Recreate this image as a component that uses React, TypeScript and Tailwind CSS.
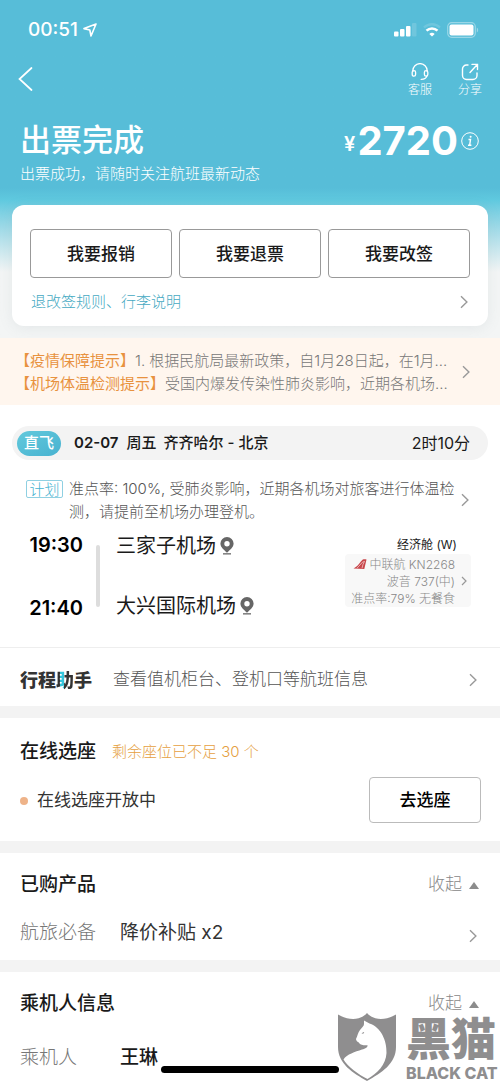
import type { ReactNode } from "react";

function Chevron({ className = "" }: { className?: string }) {
  return (
    <svg
      viewBox="0 0 8 14"
      className={`h-[14px] w-2 shrink-0 text-[#999] ${className}`}
      fill="none"
      stroke="currentColor"
      strokeWidth="1.4"
      aria-hidden="true"
    >
      <path d="M1 1.2 6.9 7 1 12.8" />
    </svg>
  );
}

function Pin() {
  return (
    <svg viewBox="0 0 14 18" className="h-[18px] w-[14px] shrink-0" fill="#666" aria-hidden="true">
      <path
        fillRule="evenodd"
        d="M7 0a6.6 6.6 0 0 1 6.6 6.6C13.600 10.400 10 13 7 15.800 4 13 .4 10.400 .4 6.600A6.600 6.600 0 0 1 7 0Zm0 4a2.700 2.700 0 1 0 0 5.400A2.700 2.700 0 0 0 7 4Z"
      />
      <path d="M3 16.200h8v1.300H3z" />
    </svg>
  );
}

function StatusBar() {
  return (
    <div className="flex h-[60px] items-center justify-between pl-7 pr-[21px]">
      <div className="flex items-center gap-[5px]">
        <span className="text-[19px] font-medium leading-6">00:51</span>
        <svg viewBox="0 0 14 14" className="h-[14px] w-[14px]" fill="none" stroke="white" strokeWidth="1.6" strokeLinejoin="round" aria-hidden="true">
          <path d="M13 1 1 5.600l5.800 1.400 1.200 6Z" />
        </svg>
      </div>
      <div className="flex items-center gap-[6px]">
        <svg viewBox="0 0 23 14" className="h-[14px] w-[23px]" fill="white" aria-hidden="true">
          <rect x="0" y="8.500" width="4.500" height="5" rx="1" />
          <rect x="6" y="6" width="4.500" height="7.500" rx="1" />
          <rect x="12" y="3" width="4.500" height="10.500" rx="1" />
          <rect x="18" y="0" width="4.500" height="13.500" rx="1" opacity=".15" />
        </svg>
        <svg viewBox="0 0 18 14" className="h-[14px] w-[18px]" fill="none" stroke="white" aria-hidden="true">
          <path d="M1 4.500a11.500 11.500 0 0 1 16 0" strokeWidth="2.300" opacity=".15" />
          <path d="M3.500 7.600a8 8 0 0 1 11 0" strokeWidth="2.500" />
          <path d="M9 13.600 6.300 11a4 4 0 0 1 5.400 0Z" fill="white" stroke="none" />
        </svg>
        <svg viewBox="0 0 32 16" className="h-4 w-8" fill="none" aria-hidden="true">
          <rect x=".7" y=".7" width="27.600" height="14.600" rx="4" stroke="white" strokeWidth="1.200" opacity=".4" />
          <rect x="2.500" y="2.500" width="24" height="11" rx="2" fill="white" />
          <path d="M29.800 5.500v5c1.800-.8 1.800-4.200 0-5Z" fill="white" opacity=".4" />
        </svg>
      </div>
    </div>
  );
}

function Header() {
  return (
    <header className="text-white">
      <StatusBar />
      <div className="flex h-[42px] items-start justify-between pl-[18px] pr-[18px]">
        <button type="button" aria-label="返回" className="mt-[7px]">
          <svg viewBox="0 0 15 24" className="h-6 w-[15px]" fill="none" stroke="white" strokeWidth="1.700" strokeLinecap="round" aria-hidden="true">
            <path d="M13.500 1 1.500 12l12 11" />
          </svg>
        </button>
        <div className="flex gap-[26px] text-xs">
          <button type="button" className="flex flex-col items-center">
            <svg viewBox="0 0 18 18" className="mt-[3px] h-[18px] w-[18px]" fill="none" stroke="white" strokeWidth="1.300" strokeLinecap="round" aria-hidden="true">
              <path d="M1.800 8.500V7.800a7.200 7.200 0 0 1 14.400 0v.7" />
              <rect x="1.200" y="7.600" width="3.400" height="5.600" rx="1.700" />
              <rect x="13.400" y="7.600" width="3.400" height="5.600" rx="1.700" />
              <path d="M15.800 13.200c-.6 2.200-2.400 3.200-5.600 3.200" />
            </svg>
            <span className="mt-px leading-4 font-light">客服</span>
          </button>
          <button type="button" className="flex flex-col items-center">
            <svg viewBox="0 0 18 18" className="mt-[3px] h-[18px] w-[18px]" fill="none" stroke="white" strokeWidth="1.400" strokeLinecap="round" aria-hidden="true">
              <path d="M7 2H5.500A4 4 0 0 0 1.500 6v6.500a4 4 0 0 0 4 4h6.500a4 4 0 0 0 4-4V10" />
              <path d="M9 9.500 16.300 1.600M11 1.400h5.500v5.200" />
            </svg>
            <span className="mt-px leading-4 font-light">分享</span>
          </button>
        </div>
      </div>
      <div className="flex h-[103px] items-start justify-between pl-5 pr-[21px]">
        <div>
          <h1 className="pt-[17px] text-[31px] font-medium leading-[42px]">出票完成</h1>
          <p className="mt-px text-[15px] font-light leading-6">出票成功，请随时关注航班最新动态</p>
        </div>
        <div className="flex items-center pt-[15px]">
          <span className="mr-[2px] pt-[6px] text-xl font-semibold">¥</span>
          <span className="text-[40px] font-bold leading-[48px]">2720</span>
          <button type="button" aria-label="价格明细" className="ml-[3px]">
            <svg viewBox="0 0 18 18" className="h-[18px] w-[18px]" fill="none" stroke="white" aria-hidden="true">
              <circle cx="9" cy="9" r="8.300" strokeWidth="1" />
              <path d="M7.500 7.500h2l-.8 5.300M7 13.200h3.400" strokeWidth="1.400" />
              <circle cx="9.600" cy="4.800" r="1" fill="white" stroke="none" />
            </svg>
          </button>
        </div>
      </div>
    </header>
  );
}

function ActionCard() {
  return (
    <section className="mx-3 h-[121px] rounded-xl bg-white px-[18px] pt-6 shadow-[0_2px_14px_rgba(120,140,150,0.12)]">
      <div className="grid grid-cols-3 gap-[7px]">
        {["我要报销", "我要退票", "我要改签"].map((label) => (
          <button key={label} type="button" className="h-[49px] rounded border border-[#999] pt-[2px] text-[17px] font-medium text-[#1a1a1a]">
            {label}
          </button>
        ))}
      </div>
      <a href="#rules" className="mt-3 flex items-center justify-between pl-px pr-[2px] text-[15px] font-light leading-6 text-[#45a9c2]">
        退改签规则、行李说明
        <Chevron />
      </a>
    </section>
  );
}

function Notice() {
  return (
    <a href="#notice" className="mt-3 flex h-[67px] items-center justify-between bg-[#fff6ee] pl-[15px] pr-[30px] text-[15px] font-light leading-[23px] text-[#777]">
      <span className="whitespace-nowrap">
        <span className="block">
          <span className="font-normal text-[#e8923f]">【疫情保障提示】</span>1. 根据民航局最新政策，自1月28日起，在1月...
        </span>
        <span className="block">
          <span className="font-normal text-[#e8923f]">【机场体温检测提示】</span>受国内爆发传染性肺炎影响，近期各机场...
        </span>
      </span>
      <Chevron />
    </a>
  );
}

function Flight() {
  return (
    <section className="px-3 pt-[21px]">
      <div className="flex h-[34px] items-center rounded-full bg-[#f3f3f3] pl-[5px] pr-[18px] text-[15px] font-medium text-[#1a1a1a]">
        <span className="flex h-[25px] w-11 items-center justify-center rounded-full bg-linear-to-br from-[#62c9dc] to-[#48b2d0] text-white">
          直飞
        </span>
        <span className="ml-[13px] font-semibold">02-07</span>
        <span className="ml-2">周五</span>
        <span className="ml-[7px]">齐齐哈尔 - 北京</span>
        <span className="ml-auto text-base font-normal">2时10分</span>
      </div>
      <a href="#punctuality" className="mt-[17px] flex items-start pl-[14px] pr-[19px] text-[15px] font-light leading-[23px] text-[#555]">
        <span className="mt-[3px] flex h-[18px] w-[37px] shrink-0 items-center justify-center rounded-xs border border-[#8fd0e2] text-[#45b2d0]">
          计划
        </span>
        <span className="ml-[6px] flex-1">准点率: 100%, 受肺炎影响，近期各机场对旅客进行体温检测，请提前至机场办理登机。</span>
        <Chevron className="mt-4" />
      </a>
      <div className="mt-[9px] flex h-[115px] text-[#1a1a1a]">
        <div className="flex w-[72px] flex-col items-end gap-[39px] pt-px pr-px text-[20px] font-semibold leading-6 text-black">
          <time>19:30</time>
          <time>21:40</time>
        </div>
        <div className="mt-[13px] ml-3 h-[62px] w-1 rounded-full bg-[#ddd]" />
        <div className="ml-4 flex flex-col gap-8 text-[20px] leading-7">
          <div className="flex items-center gap-[4px]">
            三家子机场
            <Pin />
          </div>
          <div className="flex items-center gap-[4px]">
            大兴国际机场
            <Pin />
          </div>
        </div>
        <div className="mr-[17px] ml-auto w-[126px] text-right text-[12px] leading-[17px]">
          <p className="pt-1 pr-[14px]">经济舱 (W)</p>
          <a href="#aircraft" className="mt-px flex h-[53px] items-center justify-end gap-[6px] rounded bg-[#f8f8f8] pt-px pr-1 font-light text-[#888]">
            <span className="whitespace-nowrap">
              <span className="flex items-center justify-end gap-[2px]">
                <svg viewBox="0 0 14 11" className="h-[11px] w-[14px]" aria-hidden="true">
                  <path d="M.5 9.500C5 7.500 7 3 9.500.8c1-.6 2.500-.6 4-.3L11.300 10Z" fill="#c8474b" />
                  <path d="M4 9.200 9.500 3.200l2-.8-1.500 3-1 3.800" fill="none" stroke="#f0c8ca" strokeWidth=".8" />
                </svg>
                中联航 KN2268
              </span>
              <span className="block">波音 737(中)</span>
              <span className="block">准点率:79% 无餐食</span>
            </span>
            <svg viewBox="0 0 6 10" className="h-[10px] w-[6px]" fill="none" stroke="#999" strokeWidth="1.200" aria-hidden="true">
              <path d="m1 1 4 4-4 4" />
            </svg>
          </a>
        </div>
      </div>
    </section>
  );
}

function Assistant() {
  return (
    <a href="#assistant" className="flex h-[59px] items-center border-t border-[#eee] pr-[23px] pl-5 pt-[6px] text-[17px] font-light text-[#555]">
      <span className="w-[93px] shrink-0 text-[18px] font-black text-[#333]">
        行程
        <span className="bg-[linear-gradient(90deg,#333_22%,#35c5dc_22%,#35c5dc_42%,#333_42%)] bg-clip-text text-transparent">助</span>
        手
      </span>
      <span>查看值机柜台、登机口等航班信息</span>
      <Chevron className="ml-auto" />
    </a>
  );
}

function Section({ title, note, collapsible, children }: { title: string; note?: string; collapsible?: boolean; children: ReactNode }) {
  return (
    <section className="border-t-12 border-[#f3f3f3] pr-[19px] pl-5">
      <div className={`flex items-center ${note ? "h-[68px]" : "h-16"}`}>
        <h2 className="text-[19px] font-medium text-[#1a1a1a]">{title}</h2>
        {note && <span className="ml-4 text-[15px] font-light text-[#e5a040]">{note}</span>}
        {collapsible && (
          <button type="button" className="ml-auto flex items-center gap-[7px] pr-[2px] text-[17px] font-light text-[#888]">
            收起
            <svg viewBox="0 0 10 7" className="h-[7px] w-[10px]" fill="#8c8c8c" aria-hidden="true">
              <path d="M5 0 10 7H0Z" />
            </svg>
          </button>
        )}
      </div>
      {children}
    </section>
  );
}

function Watermark() {
  return (
    <div className="absolute right-0 bottom-0 flex h-[70px] items-end text-[#8f8e8f]">
      <svg viewBox="0 0 60 70" className="h-[70px] w-[60px]" aria-hidden="true">
        <path
          d="M1 2.500C11 8.500 23 9 30 1 37 9 49 8.500 59 2.500V35C59 52 44 61 30 69 16 61 1 52 1 35Z"
          fill="currentColor"
        />
        <path
          d="M27 8.500 32.500 11.500C44 15 50 29 49.500 41 49 53 40 61.500 30.500 67 22 63 10 54 6.500 47.500 10 42 18 40 25 37.500 28.500 36.500 31 35 30.500 33.200 27 33.500 23.500 33 22.500 31.500 22 30 19 29.500 19 27 20.500 24 21 20.500 23 18 25 15.500 27 14 27 12Z"
          fill="white"
        />
        <path d="m24.500 21.800 1.500-1.500 1.200-.3-.6 1.600Z" fill="currentColor" />
      </svg>
      <div className="flex w-[103px] flex-col items-start pl-[9px]">
        <span className="text-[45px] font-black leading-[48px] whitespace-nowrap">黑猫</span>
        <span className="text-[16px] font-extrabold leading-[18px] whitespace-nowrap">BLACK CAT</span>
      </div>
    </div>
  );
}

export default function App() {
  return (
    <div className="relative min-h-screen overflow-hidden bg-white font-['Inter','Noto_Sans_CJK_SC',sans-serif]">
      <div className="bg-linear-to-b from-[#57bdd8] from-[188px] via-[#5fc9df] via-[200px] to-[#f3f5f5] to-[272px]">
        <Header />
        <ActionCard />
        <Notice />
      </div>
      <Flight />
      <Assistant />
      <Section title="在线选座" note="剩余座位已不足 30 个">
        <div className="flex h-[55px] items-center justify-between pb-[27px]">
          <p className="flex items-center gap-[9px] pt-[2px] text-[17px] font-normal text-[#333]">
            <span className="h-2 w-2 rounded-full bg-[#eeb389]" />
            在线选座开放中
          </p>
          <button type="button" className="h-[46px] w-28 rounded border border-[#bbb] pt-[2px] text-[17px] font-medium text-black">
            去选座
          </button>
        </div>
      </Section>
      <Section title="已购产品" collapsible>
        <a href="#products" className="flex h-[43px] items-start pr-1 text-[19px] leading-8 text-[#333]">
          <span className="w-[100px] font-light text-[#777]">航旅必备</span>
          <span>降价补贴 x2</span>
          <Chevron className="mt-3 ml-auto" />
        </a>
      </Section>
      <Section title="乘机人信息" collapsible>
        <div className="flex items-center pt-[6px] text-[19px] leading-8">
          <span className="w-[100px] font-light text-[#777]">乘机人</span>
          <span className="font-medium text-[#1a1a1a]">王琳</span>
        </div>
      </Section>
      <div className="absolute bottom-[9px] left-1/2 h-[7px] w-[178px] -translate-x-1/2 rounded-full bg-black" />
      <Watermark />
    </div>
  );
}
